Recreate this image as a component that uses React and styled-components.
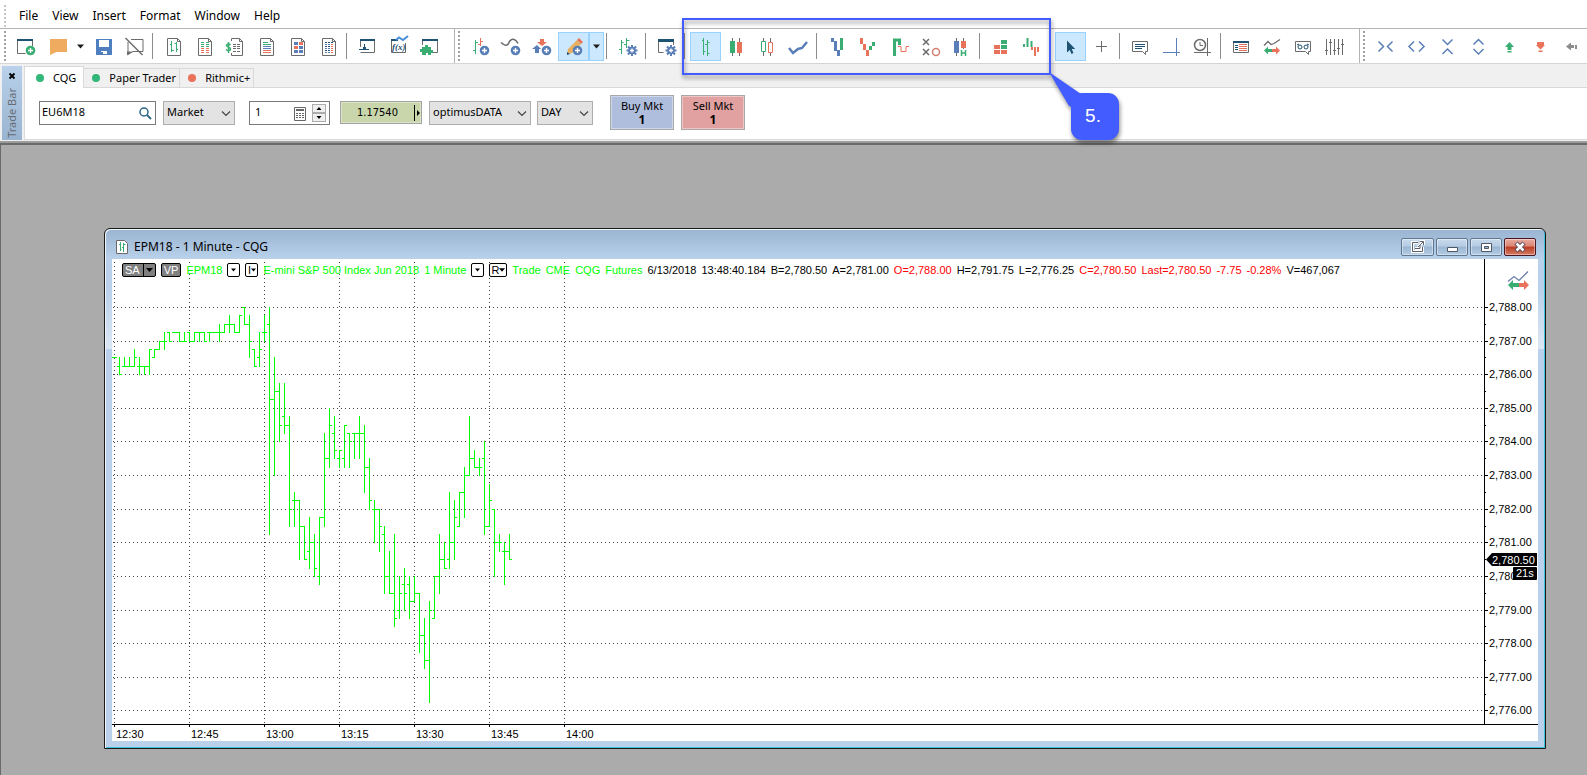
import React from 'react';
import styled, { createGlobalStyle, css } from 'styled-components';

const GlobalStyle = createGlobalStyle`
    * {
        box-sizing: border-box;
    }

    body {
        margin: 0;
        background: #ababab;
        color: #000;
        font-family: "Noto Sans", "Open Sans", sans-serif;
        font-size: 12px;
    }

    button, input, select {
        font: inherit;
        color: inherit;
        margin: 0;
        padding: 0;
        border: 0;
        border-radius: 0;
        background: none;
    }
`;

const Page = styled.div`
    display: flex;
    flex-direction: column;
    min-height: 100vh;
    overflow: hidden;
`;

const MenuBar = styled.nav`
    display: flex;
    align-items: center;
    height: 29px;
    padding: 3px 0 0 4px;
    gap: 14px;
    background: #fff;
    border-bottom: 1px solid #b4b4b4;
`;

const MenuItem = styled.button`
    font-size: 12px;
    line-height: 16px;
`;

const MenuGrip = styled.span`
    width: 2px;
    height: 22px;
    margin: 0 -1px 0 0;
    background: repeating-linear-gradient(#c4c4c4 0 2px, #fff 2px 4px);
`;

const ToolBars = styled.div`
    display: flex;
    height: 35px;
    background: #fff;
    border-bottom: 1px solid #d4d4d4;
`;

const ToolBar = styled.div`
    display: flex;
    flex: none;
    align-items: center;
    padding-right: ${props => props.$last ? 0 : 9}px;
`;

const Grip = styled.span`
    align-self: stretch;
    width: 11px;
    border-left: ${props => props.$edge ? '1px solid #b4b4b4' : '0'};
    padding: 2px 0 0 ${props => props.$edge ? 3 : 4}px;

    &::before {
        content: "";
        display: block;
        width: 2px;
        height: 100%;
        background: repeating-linear-gradient(#a0a0a0 0 2px, #fff 2px 4px);
    }
`;

const Separator = styled.span`
    width: 8px;
    height: 26px;
    padding-left: 2px;

    &::before {
        content: "";
        display: block;
        width: 1px;
        height: 100%;
        background: #8c8c8c;
    }
`;

const activeTool = css`
    background: #cce8ff;
    box-shadow: inset 0 0 0 1px #99d1ff;
`;

const ToolButton = styled.button`
    display: block;
    width: ${props => props.$narrow ? 15 : 31}px;
    height: 29px;
    ${props => props.$active && activeTool}

    svg {
        display: block;
    }
`;

const ToolGroup = styled.div`
    display: flex;
    align-items: center;
    position: relative;
`;

const Callout = styled.div`
    position: absolute;
    z-index: 2;
    top: -14px;
    left: -8px;
    right: -4px;
    height: 57px;
    border: 2px solid #425cff;
    pointer-events: none;
    filter: drop-shadow(1px 3px 2px rgba(0, 0, 0, .45));
`;

const CalloutTail = styled.svg`
    position: absolute;
    top: 52px;
    right: -32px;
`;

const CalloutBubble = styled.div`
    position: absolute;
    top: 73px;
    right: -70px;
    display: flex;
    align-items: center;
    justify-content: center;
    width: 48px;
    height: 47px;
    padding-right: 4px;
    border-radius: 11px;
    background: #425cff;
    color: #fff;
    font-family: "Liberation Sans", Arial, sans-serif;
    font-size: 19px;
`;

const TradeBar = styled.section`
    display: flex;
    height: 79px;
    padding: 2px 0 1px 2px;
    background: #f0f0f0;
    border-bottom: 2px solid #9c9c9c;
`;

const TradeBarHandle = styled.div`
    display: flex;
    flex-direction: column;
    align-items: center;
    flex: none;
    width: 20px;
    margin-right: 2px;
    padding-top: 4px;
    gap: 6px;
    background: linear-gradient(#b9d1ea, #99b4d1);
`;

const CloseButton = styled.button`
    width: 12px;
    height: 12px;

    svg {
        display: block;
    }
`;

const HandleTitle = styled.span`
    writing-mode: vertical-rl;
    transform: rotate(180deg);
    color: #686c74;
    font-size: 11px;
    line-height: 14px;
`;

const TradePanel = styled.div`
    display: flex;
    flex: 1;
    flex-direction: column;
`;

const Tabs = styled.div`
    display: flex;
    align-items: flex-end;
    height: 22px;
    border-bottom: 1px solid #d9d9d9;
`;

const Tab = styled.button`
    display: flex;
    align-items: center;
    gap: 9px;
    height: ${props => props.$selected ? 22 : 20}px;
    margin-bottom: -1px;
    padding: 0 ${props => props.$selected ? 7 : 3}px 0 ${props => props.$selected ? 11 : 8}px;
    background: ${props => props.$selected ? '#fff' : '#f0f0f0'};
    border: solid #d9d9d9;
    border-width: 1px 1px ${props => props.$selected ? 0 : 1}px ${props => props.$selected ? 1 : 0}px;
    font-size: 11px;
    line-height: 16px;
`;

const Dot = styled.span`
    width: 8px;
    height: 8px;
    border-radius: 50%;
    background: ${props => props.$color};
`;

const OrderForm = styled.form`
    display: flex;
    align-items: center;
    flex: 1;
    padding: 0 0 2px 14px;
    background: #fff;
    border: solid #d9d9d9;
    border-width: 0 0 1px 1px;
`;

const Field = styled.span`
    display: flex;
    align-items: center;
    flex: none;
    width: ${props => props.$width}px;
    height: 24px;
    margin-right: ${props => props.$gap}px;
    padding: 0 3px 0 ${props => props.$indent || 2}px;
    background: #fff;
    border: 1px solid #7a7a7a;
`;

const TextBox = styled.input`
    flex: 1;
    min-width: 0;
    height: 20px;
    padding-bottom: 2px;
    outline: 0;
    font-size: 11px;
`;

const IconButton = styled.button`
    width: ${props => props.$size}px;
    height: ${props => props.$size}px;

    svg {
        display: block;
    }
`;

const Stepper = styled.span`
    display: flex;
    flex-direction: column;
    width: 14px;
    height: 18px;
    margin-left: 6px;
`;

const StepButton = styled.button`
    height: 9px;
    background: #f0f0f0;
    border: 1px solid #acacac;

    svg {
        display: block;
    }
`;

const SelectBox = styled.span`
    display: flex;
    position: relative;
    flex: none;
    width: ${props => props.$width}px;
    margin-right: ${props => props.$gap}px;

    svg {
        position: absolute;
        right: 4px;
        top: 9px;
        pointer-events: none;
    }
`;

const Select = styled.select`
    appearance: none;
    width: 100%;
    height: 24px;
    padding: 0 16px 2px 3px;
    background: #e3e3e3;
    border: 1px solid #adadad;
    font-size: 11px;
`;

const PriceButton = styled.button`
    display: flex;
    align-items: center;
    flex: none;
    width: 82px;
    height: 23px;
    margin-right: 7px;
    background: #c9d6ac;
    border: 1px solid #a3a3a3;
    box-shadow: inset 0 0 0 1px #dbe4c6;
    font-family: "DejaVu Sans Condensed", "DejaVu Sans", sans-serif;
    font-size: 11px;
    line-height: 14px;
`;

const PriceText = styled.span`
    flex: 1;
    text-align: center;
`;

const OrderButton = styled.button`
    flex: none;
    width: 64px;
    height: 35px;
    margin-right: 7px;
    background: ${props => props.$sell ? '#e2a1a1' : '#b0bedd'};
    border: 1px solid #a8a8a8;
    box-shadow: inset 0 0 0 1px ${props => props.$sell ? '#efc4c4' : '#cdd6ea'};
    font-size: 11px;
    line-height: 14px;
`;

const Quantity = styled.strong`
    display: block;
    font-size: 12px;
`;

const Workspace = styled.main`
    flex: 1;
    padding: 83px 41px 26px 103px;
    background: #ababab;
    border: solid #6a6a6a;
    border-width: 2px 0 0 1px;
`;

const ChartWindow = styled.section`
    padding: 0 7px 7px;
    border: 1px solid #1b1b1b;
    border-radius: 6px 6px 0 0;
    background: linear-gradient(#99b4d1, #b9d1ea 30px, #b9d1ea 60px, #dce7f4 120px, #b9d1ea 120px);
    box-shadow: inset 1px 1px 0 #eef4fa, inset -1px -1px 0 #3cc3dc;
`;

const TitleBar = styled.header`
    display: flex;
    align-items: center;
    height: 30px;
    padding: 6px 2px 0 4px;
`;

const Title = styled.h1`
    flex: 1;
    margin: 0 0 0 6px;
    font-size: 12px;
    font-weight: 400;
    line-height: 16px;
`;

const WindowButton = styled.button`
    width: ${props => props.$wide ? 33 : 32}px;
    height: 18px;
    margin-left: 2px;
    border: 1px solid ${props => props.$close ? '#4a1420' : '#5f7791'};
    border-radius: 2px;
    background: ${props => props.$close
        ? 'linear-gradient(#e9aca0, #d98473 45%, #bd3b23 50%, #d47c65)'
        : 'linear-gradient(#c9dbec, #b4cbe2 45%, #9bb6d2 50%, #b3cce5)'};
    box-shadow: inset 0 0 0 1px rgba(255, 255, 255, .4);

    svg {
        display: block;
        margin: 0 auto;
    }
`;

const Chart = styled.div`
    position: relative;
    display: grid;
    grid-template-columns: minmax(0, 1fr) 54px;
    background: #fff;
    font-family: "Liberation Sans", Arial, sans-serif;
    font-size: 11px;

    svg {
        display: block;
    }
`;

const TimeAxis = styled.svg`
    grid-column: 1 / -1;
`;

const ChartInfo = styled.div`
    position: absolute;
    top: 3px;
    left: 10px;
    display: flex;
    align-items: center;
    gap: 5px;
    line-height: 16px;
    white-space: nowrap;
`;

const Quotes = styled.div`
    display: flex;
    gap: 5px;
`;

const Quote = styled.span`
    color: ${props => props.$color || '#000'};
`;

const Chip = styled.button`
    display: flex;
    align-items: center;
    justify-content: center;
    height: 14px;
    min-width: 13px;
    padding: 0 ${props => props.$dark ? 2 : 1}px;
    background: ${props => props.$dark ? '#808080' : '#fff'};
    color: ${props => props.$dark ? '#fff' : '#000'};
    border: 1px solid #000;
    border-radius: 2px;
    line-height: 12px;
`;

const ChipArrow = styled.span`
    display: flex;
    align-items: center;
    height: 12px;
    margin-left: 3px;
    padding-left: 2px;
    border-left: 1px solid #000;
`;

const GREEN = '#3aad72';
const RED = '#e8735a';
const BLUE = '#5a7fb8';
const NAVY = '#1f5373';
const GRAY = '#6b6b6b';
const LIME = '#00ff00';

// every tool icon is drawn in the 31 x 29 box of its button
const Icon = ({ children, width = 31 }) => (
    <svg width={width} height="29" viewBox={`0 0 ${width} 29`} fill="none" aria-hidden="true">
        {children}
    </svg>
);

const DownArrow = ({ size = 7, color = '#000' }) => (
    <svg width={size} height="4" viewBox="0 0 7 4" aria-hidden="true">
        <path d="M0 0h7L3.500 4z" fill={color} />
    </svg>
);

const Sheet = () => <path d="M9.500 6.500h10l3 3v14h-13zM19.500 6.500v3h3" stroke={GRAY} />;

const Plus = ({ color }) => (
    <>
        <circle cx="19.500" cy="18.500" r="4.800" fill={color} />
        <path d="M19.500 16v5M17 18.500h5" stroke="#fff" strokeWidth="1.400" />
    </>
);

const Gear = () => (
    <>
        <circle cx="20" cy="18.500" r="3.800" fill={BLUE} />
        <path d="M20 13v11M14.500 18.500h11M16 14.500l8 8M24 14.500l-8 8" stroke={BLUE} strokeWidth="2" />
        <path d="M20 16.500v4M18 18.500h4" stroke="#fff" strokeWidth="1.400" />
    </>
);

const icons = {
    newWindow: <>
        <path d="M6.500 9v12.500h8M21.500 9v5" stroke={GRAY} />
        <path d="M6 7h16v2H6z" fill={NAVY} />
        <Plus color={GREEN} />
    </>,
    folder: <path d="M8 7h17v13H14.500L8 23z" fill="#efab5f" />,
    save: <>
        <path d="M8 7h16v16H8z" fill="#4f7fc0" />
        <path d="M11 8h10v7H11zM13 19h6v3h-4v-2h-2z" fill="#fff" />
    </>,
    noComment: <>
        <path d="M12 7.500h12v12H14l-5 3V10" stroke={GRAY} />
        <path d="M8 19.500h5l-5 4z" fill={GRAY} />
        <path d="M6.500 6l17 17" stroke={GRAY} strokeWidth="1.500" />
    </>,
    sheetBars: <>
        <Sheet />
        <path d="M13.500 9v11M12 12.500h1M14 18.500h2M18.500 10v10M16.500 11.500h2M19 17.500h1" stroke={GREEN} />
    </>,
    sheetGrid: <>
        <Sheet />
        <path d="M12 10.500h3M12 12.500h3M17 10.500h3M17 12.500h3M12 14.500h3" stroke={GREEN} />
        <path d="M12 16.500h3M12 18.500h3M12 20.500h3M17 16.500h3M17 18.500h3M17 20.500h3" stroke={RED} />
        <path d="M17 14.500h3" stroke={GREEN} />
    </>,
    sheetDollar: <>
        <path d="M11.500 9V6.500h8l3 3v14h-11V21M19.500 6.500v3h3" stroke={GRAY} />
        <path d="M13 12.500h3M17 12.500h3M13 14.500h3M17 14.500h3M13 16.500h3M17 16.500h3M13 19.500h3M17 19.500h3" stroke={GRAY} />
        <path d="M10.500 13c-1-1.500-4-1.500-4 .5s4 1.500 4 3.500-3 2-4.500.5M8.500 10v11" stroke={GREEN} strokeWidth="1.500" />
    </>,
    sheetLines: <>
        <Sheet />
        <path d="M12 10.500h5M12 12.500h8" stroke={GREEN} />
        <path d="M12 14.500h8M12 16.500h8" stroke={BLUE} />
        <path d="M12 18.500h8M12 20.500h8" stroke={RED} />
    </>,
    sheetBlocks: <>
        <Sheet />
        <path d="M12 10h4v3h-4zM17 14h4v3h-4zM12 18h4v3h-4z" fill={BLUE} />
        <path d="M17 10h4v3h-4zM12 14h4v3h-4z" fill={RED} />
        <path d="M17 18h4v3h-4z" fill={BLUE} />
    </>,
    sheetTable: <>
        <Sheet />
        <path d="M12 10.500h2M15 10.500h2M18 10.500h2M12 18.500h2M15 18.500h2M12 14.500h2M15 14.500h2" stroke={NAVY} />
        <path d="M12 12.500h2M15 12.500h2M12 16.500h2M15 16.500h2M12 20.500h2M15 20.500h2" stroke={BLUE} />
        <path d="M18 12.500h2M18 14.500h2M18 16.500h2M18 18.500h2M18 20.500h2" stroke={RED} />
    </>,
    dockWindow: <>
        <path d="M8.500 9v6M8.500 20.500h14V9" stroke={GRAY} />
        <path d="M8 7h15v2H8zM11 15h3v3h-3z" fill={NAVY} />
        <path d="M12.500 12v5M7 17.500h10" stroke={NAVY} />
    </>,
    formula: <>
        <path d="M14 8.500H8.500v12h14V11" stroke={GRAY} />
        <path d="M8 7h7v2H8z" fill={NAVY} />
        <path d="M13 8l3-2.500L20 8l5-4" stroke="#4a90d9" strokeWidth="2" />
        <text x="9" y="18" fill={NAVY} fontFamily="Liberation Serif, serif" fontStyle="italic" fontWeight="700" fontSize="9">f(x)</text>
    </>,
    puzzle: <>
        <path d="M8.500 9v4M18 20.500h5.500V9" stroke={GRAY} />
        <path d="M8 7h16v2H8z" fill={NAVY} />
        <path d="M8 15h3v-2h3v2h3v3h2v3h-2v2h-3v-2h-2v2H8v-3H6v-3h2z" fill={GREEN} />
    </>,
    addStudy: <>
        <path d="M10.500 8v14M8 18.500h2M11 10.500h2" stroke={GREEN} />
        <path d="M15.500 6v8M16 9.500h2M13 12.500h2" stroke={RED} />
        <Plus color={BLUE} />
    </>,
    addCurve: <>
        <path d="M5 10.500c2 2 6 5 8 0 2-4.500 6-4.500 9 1" stroke={GRAY} strokeWidth="1.500" />
        <Plus color={BLUE} />
    </>,
    addSignal: <>
        <path d="M13 7h4v3h3l-5 4-5-4h3z" fill={RED} />
        <path d="M5 17l5-4 4 4h-2v4H8v-4z" fill={BLUE} />
        <Plus color={BLUE} />
    </>,
    pencil: <>
        <path d="M10 17l9-9 4 4-9 9-5 1.500z" fill="#e8b060" />
        <path d="M19 8l2-2 4 4-2 2z" fill={RED} />
        <path d="M9 20l3 2-3 1z" fill={NAVY} />
        <Plus color={BLUE} />
    </>,
    barSettings: <>
        <path d="M9.500 8v14M7 17.500h2M9.500 10.500h2M14.500 6v10M12 12.500h2M14.500 8.500h3" stroke={GREEN} />
        <Gear />
    </>,
    windowSettings: <>
        <path d="M7.500 9v11.500h5M22.500 9v4" stroke={GRAY} />
        <path d="M7 7h16v3H7z" fill={NAVY} />
        <Gear />
    </>,
    ohlc: <path d="M13.500 6v17M12 8.500h1M13.500 19.500h2M17.500 8v16M17.500 10.500h2M15 12.500h2M17.500 21.500h2" stroke={GREEN} />,
    candles: <>
        <path d="M11.500 6v18M18.500 6v18" stroke={GRAY} />
        <path d="M9 9h5v12H9z" fill={GREEN} />
        <path d="M16 10h5v11h-5z" fill={RED} />
    </>,
    hollowCandles: <>
        <path d="M11.500 6v3M11.500 20v4M18.500 6v4M18.500 21v3" stroke={GRAY} />
        <path d="M9.500 9.500h4v10h-4z" stroke={GREEN} />
        <path d="M16.500 10.500h4v10h-4z" stroke={RED} />
    </>,
    line: <path d="M6 16l4 5 5-4 4-1 5-6" stroke={BLUE} strokeWidth="2.500" />,
    threeLine: <>
        <path d="M9 6h3v4H9zM12 9h3v10h-3zM15 18h3v6h-3z" fill={BLUE} />
        <path d="M18 6h3v12h-3z" fill={GREEN} />
    </>,
    renko: <>
        <path d="M7 6h3v6H7zM10 12h3v6h-3zM13 18h3v6h-3z" fill={RED} />
        <path d="M16 14h3v4h-3zM19 10h3v4h-3z" fill={GREEN} />
    </>,
    kagi: <>
        <path d="M10.500 24V8h5v5" stroke={GREEN} strokeWidth="3" />
        <path d="M14 14.500h3v5h5v-5h3" stroke={RED} />
    </>,
    pointFigure: <>
        <path d="M8 7l6 6M14 7l-6 6M8 17l6 6M14 17l-6 6" stroke={GRAY} strokeWidth="1.500" />
        <circle cx="21" cy="20" r="3.500" stroke="#d4806f" strokeWidth="1.500" />
    </>,
    heikin: <>
        <path d="M10.500 6v18M17.500 6v11" stroke={GRAY} />
        <path d="M8 9h5v12H8z" fill={BLUE} />
        <path d="M15 9h5v7h-5z" fill={RED} />
        <path d="M15.500 18v6M19.500 18v6M15.500 21h4" stroke={GREEN} strokeWidth="1.500" />
    </>,
    profile: <>
        <path d="M9 13h6v4H9zM9 18h6v4H9zM16 18h6v4h-6z" fill={RED} />
        <path d="M16 8h6v4h-6zM16 13h6v4h-6z" fill={GREEN} />
    </>,
    histogram: <>
        <path d="M8 12v3M11.500 6v9M15.500 9v6" stroke={GREEN} strokeWidth="2" />
        <path d="M16 15v3M19 15v9M22 15v5" stroke={RED} strokeWidth="2" />
        <path d="M22.500 15.500V20" stroke={RED} />
    </>,
    pointer: <path d="M12 8.500v12l2.700-2.500 1.800 4 2-1-1.800-4h3.500z" fill={NAVY} />,
    crosshair: <path d="M15.500 9v11M10 14.500h11" stroke={GRAY} />,
    note: <>
        <path d="M7.500 9.500h15v10h-2v3l-3-3h-10z" stroke={GRAY} />
        <path d="M10 12.500h10M10 14.500h10M10 16.500h7" stroke={NAVY} />
    </>,
    axisCross: <path d="M20.500 6v18M7 20.500h17" stroke={BLUE} />,
    clockAxis: <>
        <circle cx="13" cy="13" r="5.500" stroke={GRAY} strokeWidth="1.500" />
        <path d="M13 10v3.500h3M20.500 6v18M7 20.500h17" stroke={GRAY} />
    </>,
    orderTable: <>
        <path d="M7.500 9.500h15v11h-15z" stroke={GRAY} />
        <path d="M7 9h16v2H7z" fill={NAVY} />
        <path d="M9 13.500h3M9 15.500h3M9 17.500h3" stroke={NAVY} />
        <path d="M13 12.500h8M13 14.500h8M13 16.500h8M13 18.500h8" stroke={RED} />
    </>,
    tradeLine: <>
        <path d="M7 13.500l4-4 3 3 3-1 6-4" stroke={GRAY} strokeWidth="1.300" />
        <path d="M7 18.500l4-4v2.500h4v3h-4v2.500z" fill={GREEN} />
        <path d="M23 18.500l-4-4v2.500h-4v3h4v2.500z" fill={RED} />
    </>,
    watch: <>
        <path d="M7.500 9.500h15v10h-2v3l-3-3h-10z" stroke={GRAY} />
        <circle cx="12" cy="15" r="2" stroke={NAVY} />
        <circle cx="18" cy="15" r="2" stroke={NAVY} />
        <path d="M9 13l2-1M21 13l-2-1" stroke={NAVY} />
    </>,
    sliders: <path d="M7.500 7v16M11.500 7v16M15.500 7v16M19.500 7v16M23.500 7v16M6 18.500h3M10 10.500h3M14 18.500h3M18 16.500h3M22 12.500h3" stroke={GRAY} />,
    squeezeX: <path d="M8.500 9.500l5 5-5 5M22.500 9.500l-5 5 5 5" stroke={BLUE} strokeWidth="1.500" />,
    stretchX: <path d="M13 9.500l-5 5 5 5M18 9.500l5 5-5 5" stroke={BLUE} strokeWidth="1.500" />,
    squeezeY: <path d="M10.500 7.500l5 5 5-5M10.500 22l5-5 5 5" stroke={BLUE} strokeWidth="1.500" />,
    stretchY: <path d="M10.500 12.500l5-5 5 5M10.500 17l5 5 5-5" stroke={BLUE} strokeWidth="1.500" />,
    moveUp: <path d="M15.500 10l4.500 5h-2.500v3h-4v-3H11zM13.500 19h4v1.500h-4z" fill={GREEN} />,
    moveDown: <path d="M12 10h7v3h1l-4.500 4.500L11 13h1zM13.500 18.500h4v1.500h-4z" fill={RED} />,
    moveLeft: <path d="M10 14.500l5-4v2.500h3v3h-3v2.500zM19 13h2v4h-2z" fill="#8c8c8c" />
};

const Tool = ({ icon, label, active }) => (
    <ToolButton type="button" aria-label={label || icon} $active={active}>
        <Icon>{icons[icon]}</Icon>
    </ToolButton>
);

const ToolMenu = ({ label, active }) => (
    <ToolButton type="button" aria-label={label} $narrow $active={active}>
        <Icon width={15}><path d="M4 12.500h7l-3.500 4z" fill="#1c1c1c" /></Icon>
    </ToolButton>
);

const tools = names => names.map(name => <Tool key={name} icon={name} />);

const MainToolBars = () => (
    <ToolBars>
        <ToolBar>
            <Grip />
            <Tool icon="newWindow" />
            <Tool icon="folder" />
            <ToolMenu label="Folder options" />
            <Tool icon="save" />
            <Tool icon="noComment" />
            <Separator />
            {tools(['sheetBars', 'sheetGrid', 'sheetDollar', 'sheetLines', 'sheetBlocks', 'sheetTable'])}
            <Separator />
            {tools(['dockWindow', 'formula', 'puzzle'])}
        </ToolBar>
        <ToolBar>
            <Grip $edge />
            {tools(['addStudy', 'addCurve', 'addSignal'])}
            <Tool icon="pencil" active />
            <ToolMenu label="Drawing tools" active />
            <Separator />
            <Tool icon="barSettings" />
            <Separator />
            <Tool icon="windowSettings" />
            <Separator />
            <ToolGroup>
                <Tool icon="ohlc" active />
                {tools(['candles', 'hollowCandles', 'line'])}
                <Separator />
                {tools(['threeLine', 'renko', 'kagi', 'pointFigure', 'heikin'])}
                <Separator />
                {tools(['profile', 'histogram'])}
                <Callout>
                    <CalloutTail width="32" height="36" aria-hidden="true">
                        <path d="M0 0l32 22-6 14-6-2z" fill="#425cff" />
                    </CalloutTail>
                    <CalloutBubble>5.</CalloutBubble>
                </Callout>
            </ToolGroup>
            <Separator />
            <Tool icon="pointer" active />
            <Tool icon="crosshair" />
            <Separator />
            {tools(['note', 'axisCross', 'clockAxis'])}
            <Separator />
            {tools(['orderTable', 'tradeLine', 'watch', 'sliders'])}
        </ToolBar>
        <ToolBar $last>
            <Grip $edge />
            {tools(['squeezeX', 'stretchX', 'squeezeY', 'stretchY', 'moveUp', 'moveDown', 'moveLeft'])}
        </ToolBar>
    </ToolBars>
);

const DropDown = ({ label, value, width, gap }) => (
    <SelectBox $width={width} $gap={gap}>
        <Select aria-label={label} defaultValue={value}>
            <option>{value}</option>
        </Select>
        <svg width="10" height="7" viewBox="0 0 10 7" fill="none" aria-hidden="true">
            <path d="M1 1.500l4 4 4-4" stroke="#444" strokeWidth="1.200" />
        </svg>
    </SelectBox>
);

const TradePanelBar = () => (
    <TradeBar>
        <TradeBarHandle>
            <CloseButton type="button" aria-label="Close trade bar">
                <svg width="12" height="12" viewBox="0 0 12 12"><path d="M3.500 3.500l5 5M8.500 3.500l-5 5" stroke="#000" strokeWidth="1.800" /></svg>
            </CloseButton>
            <HandleTitle>Trade Bar</HandleTitle>
        </TradeBarHandle>
        <TradePanel>
            <Tabs>
                <Tab type="button" $selected><Dot $color="#33b679" />CQG</Tab>
                <Tab type="button"><Dot $color="#33b679" />Paper Trader</Tab>
                <Tab type="button"><Dot $color="#e8735a" />Rithmic+</Tab>
            </Tabs>
            <OrderForm onSubmit={e => e.preventDefault()}>
                <Field $width={117} $gap={7}>
                    <TextBox aria-label="Symbol" defaultValue="EU6M18" />
                    <IconButton type="button" aria-label="Search symbol" $size={14}>
                        <svg width="14" height="14" viewBox="0 0 14 14" fill="none">
                            <circle cx="6" cy="6" r="4" stroke="#2e6484" strokeWidth="1.500" />
                            <path d="M9 9l4 4" stroke="#2e6484" strokeWidth="1.800" />
                        </svg>
                    </IconButton>
                </Field>
                <DropDown label="Order type" value="Market" width={72} gap={14} />
                <Field $width={81} $gap={10} $indent={5}>
                    <TextBox aria-label="Quantity" defaultValue="1" />
                    <IconButton type="button" aria-label="Calculator" $size={12}>
                        <svg width="12" height="14" viewBox="0 0 12 14" fill="none">
                            <path d="M.5.5h11v13H.5z" stroke="#666" />
                            <path d="M2 3h8" stroke="#666" strokeWidth="2" />
                            <path d="M2 6.500h8M2 8.500h8M2 10.500h8" stroke="#666" strokeDasharray="2 1" />
                        </svg>
                    </IconButton>
                    <Stepper>
                        <StepButton type="button" aria-label="Increase">
                            <svg width="12" height="7" viewBox="0 0 12 7"><path d="M3.500 5h5L6 2z" /></svg>
                        </StepButton>
                        <StepButton type="button" aria-label="Decrease">
                            <svg width="12" height="7" viewBox="0 0 12 7"><path d="M3.500 2h5L6 5z" /></svg>
                        </StepButton>
                    </Stepper>
                </Field>
                <PriceButton type="button">
                    <PriceText>1.17540</PriceText>
                    <svg width="7" height="16" viewBox="0 0 7 16" aria-hidden="true">
                        <path d="M0 0h1v16H0zM3 5l3 3-3 3z" />
                    </svg>
                </PriceButton>
                <DropDown label="Account" value="optimusDATA" width={102} gap={6} />
                <DropDown label="Duration" value="DAY" width={56} gap={17} />
                <OrderButton type="button">Buy Mkt<Quantity>1</Quantity></OrderButton>
                <OrderButton type="button" $sell>Sell Mkt<Quantity>1</Quantity></OrderButton>
            </OrderForm>
        </TradePanel>
    </TradeBar>
);

// one row per minute: high, low, open, close, counted in quarter points below 2,788.00
const bars = [
    [6, 6, 6, 6], [6, 8, 7, 8], [6, 7, 7, 7], [6, 7, 7, 7], [5, 7, 7, 6], [6, 8, 7, 7], [7, 8, 7, 7], [5, 8, 7, 5],
    [5, 6, 6, 5], [4, 5, 5, 4], [3, 5, 4, 4], [3, 4, 3, 4], [3, 3, 3, 3], [3, 4, 3, 4], [3, 4, 4, 4], [3, 4, 3, 4],
    [3, 4, 4, 3], [3, 4, 3, 3], [3, 4, 3, 4], [3, 4, 3, 3], [3, 3, 3, 3], [2, 4, 3, 3], [2, 3, 3, 2], [1, 3, 2, 2],
    [2, 3, 2, 3], [1, 3, 3, 1], [0, 2, 0, 2], [1, 6, 2, 4], [5, 7, 5, 7], [3, 7, 6, 5], [1, 4, 3, 3], [0, 27, 2, 11],
    [6, 20, 11, 10], [9, 16, 10, 14], [9, 15, 13, 14], [13, 26, 14, 24], [22, 26, 23, 23], [23, 30, 23, 26],
    [26, 30, 26, 30], [25, 31, 29, 28], [27, 32, 28, 31], [25, 33, 32, 25], [15, 26, 25, 18], [12, 19, 18, 14],
    [13, 18, 15, 17], [17, 19, 18, 17], [14, 19, 18, 14], [15, 19, 15, 16], [15, 18, 15, 15], [13, 18, 15, 15],
    [14, 22, 15, 19], [18, 24, 19, 23], [23, 28, 24, 24], [24, 29, 24, 26], [26, 34, 27, 32], [29, 34, 32, 34],
    [27, 38, 34, 37], [32, 37, 36, 34], [31, 36, 33, 34], [32, 37, 33, 35], [32, 35, 35, 34], [34, 41, 34, 39],
    [37, 43, 39, 42], [35, 47, 42, 36], [32, 37, 37, 32], [27, 34, 32, 30], [28, 31, 30, 31], [22, 31, 30, 28],
    [23, 30, 28, 25], [22, 26, 26, 22], [19, 25, 22, 20], [13, 20, 20, 18], [17, 19, 18, 19], [18, 20, 19, 19],
    [16, 27, 18, 26], [21, 26, 26, 23], [24, 32, 24, 28], [27, 29, 28, 28], [28, 33, 29, 29], [27, 30, 29, 30]
];

const PLOT_HEIGHT = 465;
const times = ['12:30', '12:45', '13:00', '13:15', '13:30', '13:45', '14:00'];
const prices = Array.from({ length: 13 }, (_, i) => 2788 - i);

const timeX = i => 2 + i * 75;
const yOf = quarters => Math.round(48 + quarters * 8.405) + 0.5;
const formatPrice = price => price.toLocaleString('en-US', { minimumFractionDigits: 2 });

const barPath = bars.map(([high, low, open, close], i) => {
    const x = 2.5 + i * 5;
    return `M${x} ${yOf(high) - 0.5}V${yOf(low) + 0.5}M${x - 2.5} ${yOf(open)}H${x}M${x} ${yOf(close)}h2.500`;
}).join('');

const Plot = () => (
    <svg width="100%" height={PLOT_HEIGHT} role="img" aria-label="EPM18 one minute bars">
        {prices.map((price, i) => (
            <line key={price} x1="1" x2="100%" y1={yOf(i * 4)} y2={yOf(i * 4)} stroke="#404040" strokeDasharray="1 3" />
        ))}
        {times.map((time, i) => (
            <line key={time} x1={timeX(i) + 0.5} x2={timeX(i) + 0.5} y1="3" y2={PLOT_HEIGHT} stroke="#404040" strokeDasharray="1 3" />
        ))}
        <path d={barPath} fill="none" stroke={LIME} />
    </svg>
);

const PriceAxis = () => (
    <svg width="54" height={PLOT_HEIGHT}>
        <path d={`M.5 0V${PLOT_HEIGHT}`} stroke="#000" />
        <path d={prices.map((p, i) => `M0 ${yOf(i * 4)}h4`).join('')} stroke="#000" />
        <path d={prices.slice(1).map((p, i) => `M0 ${yOf(i * 4 + 2)}h2`).join('')} stroke="#000" />
        {prices.map((price, i) => (
            <text key={price} x="5" y={yOf(i * 4) + 3.5}>{formatPrice(price)}</text>
        ))}
        <path d="M2 300.500l6-6.500h45v13H8z" />
        <text x="8" y="305" fill="#fff">2,780.50</text>
        <path d="M30 308h22q1 0 1 1v11q0 1-1 1H30q-1 0-1-1v-11q0-1 1-1z" />
        <text x="32" y="318" fill="#fff">21s</text>
        <path d="M24 22.500l6-5 5 4 9-9" fill="none" stroke="#6b7fa8" strokeWidth="1.300" />
        <path d="M24 26l5-5v3h6v4h-6v3z" fill={GREEN} />
        <path d="M45 26l-5-5v3h-5v4h5v3z" fill={RED} />
    </svg>
);

const ChartHeader = () => (
    <ChartInfo>
        <Chip type="button" $dark>SA<ChipArrow><DownArrow color="#000" /></ChipArrow></Chip>
        <Chip type="button" $dark>VP</Chip>
        <Quote $color={LIME}>EPM18</Quote>
        <Chip type="button" aria-label="Symbol menu"><DownArrow size={5} /></Chip>
        <Chip type="button">I<DownArrow size={5} /></Chip>
        <Quote $color={LIME}>E-mini S&amp;P 500 Index Jun 2018</Quote>
        <Quote $color={LIME}>1 Minute</Quote>
        <Chip type="button" aria-label="Interval menu"><DownArrow size={5} /></Chip>
        <Chip type="button">R<DownArrow size={6} /></Chip>
        <Quotes>
            <Quote $color={LIME}>Trade</Quote>
            <Quote $color={LIME}>CME</Quote>
            <Quote $color={LIME}>CQG</Quote>
            <Quote $color={LIME}>Futures</Quote>
            <Quote>6/13/2018</Quote>
            <Quote>13:48:40.184</Quote>
            <Quote>B=2,780.50</Quote>
            <Quote>A=2,781.00</Quote>
            <Quote $color="#f00">O=2,788.00</Quote>
            <Quote>H=2,791.75</Quote>
            <Quote>L=2,776.25</Quote>
            <Quote $color="#f00">C=2,780.50</Quote>
            <Quote $color="#f00">Last=2,780.50</Quote>
            <Quote $color="#f00">-7.75</Quote>
            <Quote $color="#f00">-0.28%</Quote>
            <Quote>V=467,067</Quote>
        </Quotes>
    </ChartInfo>
);

const App = () => {
    const renderMenu = () => {
        return ['File', 'View', 'Insert', 'Format', 'Window', 'Help'].map(item => {
            return <MenuItem key={item} type="button">{item}</MenuItem>
        });
    }

    return (
        <Page>
            <GlobalStyle />
            <MenuBar>
                <MenuGrip />
                {renderMenu()}
            </MenuBar>
            <MainToolBars />
            <TradePanelBar />
            <Workspace>
                <ChartWindow>
                    <TitleBar>
                        <svg width="12" height="14" viewBox="0 0 12 14" fill="none" aria-hidden="true">
                            <path d="M.5.5h8l3 3v10H.5z" fill="#fff" stroke={GRAY} />
                            <path d="M4.500 2v9M3 4.500h1M4.500 9.500h1M7.500 3v9M7.500 4.500h2M6 7.500h1" stroke={GREEN} />
                        </svg>
                        <Title>EPM18 - 1 Minute - CQG</Title>
                        <WindowButton type="button" aria-label="Detach" $wide>
                            <svg width="16" height="14" viewBox="0 0 16 14" fill="none">
                                <path d="M8 2.500H2.500v9h10V7M5 8.500h5V5M8 7l5-5M10 1.500h3.500V5" stroke="#fff" strokeWidth="3" />
                                <path d="M8 2.500H2.500v9h10V7M5 8.500h5V5M8 7l5-5M10 1.500h3.500V5" stroke="#5a5f68" />
                            </svg>
                        </WindowButton>
                        <WindowButton type="button" aria-label="Minimize">
                            <svg width="16" height="14" viewBox="0 0 16 14"><path d="M3.500 7.500h10v4h-10z" fill="#fff" stroke="#4f5665" /></svg>
                        </WindowButton>
                        <WindowButton type="button" aria-label="Maximize">
                            <svg width="16" height="14" viewBox="0 0 16 14">
                                <path d="M3.500 3.500h10v8h-10z" fill="#fff" stroke="#4f5665" />
                                <path d="M6.500 6.500h4v2h-4z" fill="#9bb6d2" stroke="#4f5665" />
                            </svg>
                        </WindowButton>
                        <WindowButton type="button" aria-label="Close" $close>
                            <svg width="16" height="14" viewBox="0 0 16 14" fill="none">
                                <path d="M4 3l8 8M12 3l-8 8" stroke="#4f4a5c" strokeWidth="4.500" />
                                <path d="M4.500 3.500l7 7M11.500 3.500l-7 7" stroke="#fff" strokeWidth="2.500" />
                            </svg>
                        </WindowButton>
                    </TitleBar>
                    <Chart>
                        <Plot />
                        <PriceAxis />
                        <TimeAxis width="100%" height="17">
                            <path d={times.map((t, i) => `M${timeX(i) + 0.5} 0v3`).join('')} stroke="#000" />
                            <rect width="100%" height="1" />
                            {times.map((time, i) => (
                                <text key={time} x={timeX(i) + 2} y="14">{time}</text>
                            ))}
                        </TimeAxis>
                        <ChartHeader />
                    </Chart>
                </ChartWindow>
            </Workspace>
        </Page>
    );
}

export default App;
